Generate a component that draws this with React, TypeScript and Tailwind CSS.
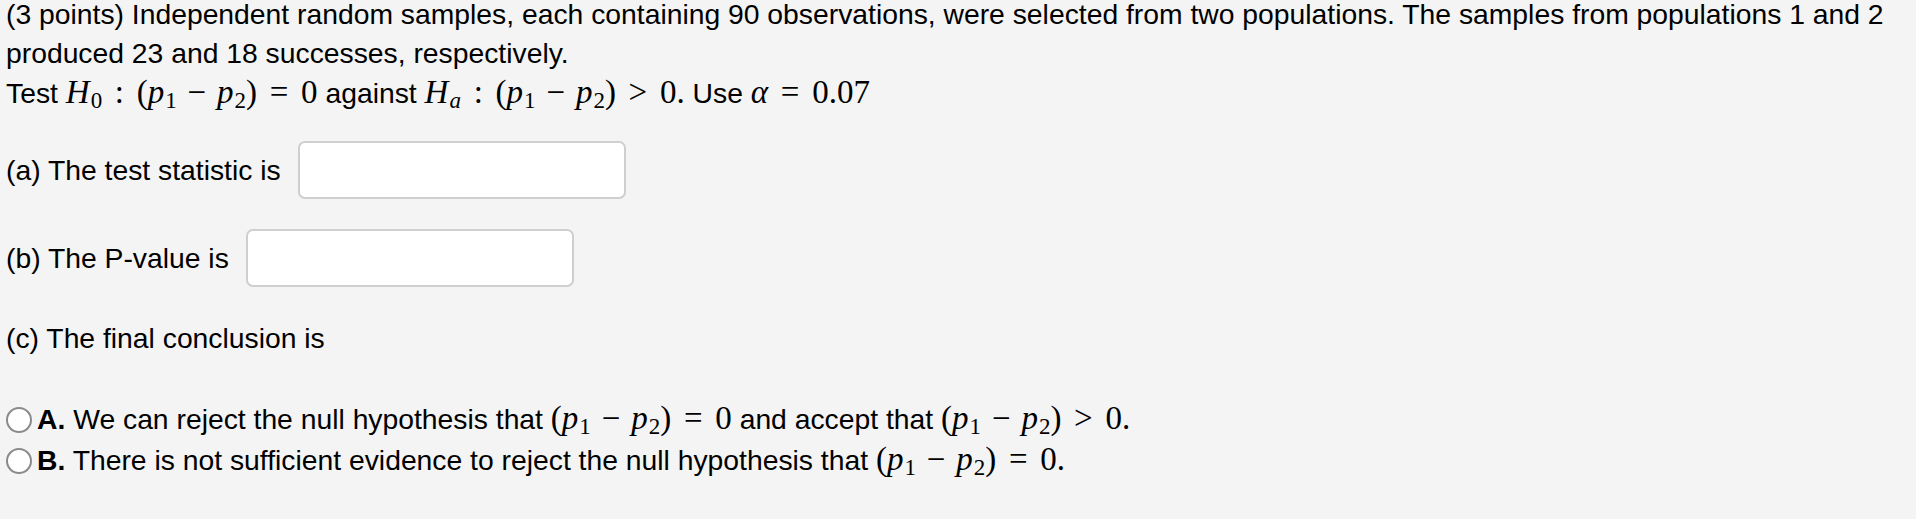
import React from "react";

const serif = "font-['Liberation_Serif','Times_New_Roman',serif]";

const V: React.FC<{ children: React.ReactNode }> = ({ children }) => (
  <span className="italic">{children}</span>
);

const Sub: React.FC<{ children: React.ReactNode }> = ({ children }) => (
  <span className="text-[23px] not-italic relative top-[5px] ml-[1px]">{children}</span>
);

// relation / binary operators padded out to MathJax widths
const Rel: React.FC<{ children: React.ReactNode }> = ({ children }) => (
  <span className="mx-[0.385em]">{children}</span>
);

const Bin: React.FC<{ children: React.ReactNode }> = ({ children }) => (
  <span className="mx-[0.33em]">{children}</span>
);

const Math: React.FC<{ children: React.ReactNode }> = ({ children }) => (
  <span className={`${serif} text-[33px] whitespace-nowrap`}>{children}</span>
);

const Diff = () => (
  <>
    (<V>p</V>
    <Sub>1</Sub>
    <Bin>−</Bin>
    <V>p</V>
    <Sub>2</Sub>)
  </>
);

const AnswerBox = () => (
  <input
    type="text"
    className="ml-[17px] w-[328px] h-[58px] bg-white border-2 border-[#cfcfcf] rounded-[7px] outline-none"
  />
);

const Radio: React.FC<{ letter: string; children: React.ReactNode }> = ({ letter, children }) => (
  <label className="flex items-center h-[41px] whitespace-nowrap">
    <span className="w-[26px] h-[26px] rounded-full border-2 border-[#8a8a8a] bg-white shrink-0" />
    <span className="ml-[5px]">
      <b>{letter}.</b> {children}
    </span>
  </label>
);

export default function App() {
  return (
    <div className="min-h-screen bg-[#f4f4f4] px-[6px] text-[28.3px] leading-[39px] text-black font-['Liberation_Sans',Arial,sans-serif]">
      <p className="-mt-[5px]">
        (3 points) Independent random samples, each containing 90 observations, were selected from two
        populations. The samples from populations 1 and 2
        <br />
        produced 23 and 18 successes, respectively.
        <br />
        Test{" "}
        <Math>
          <V>H</V>
          <Sub>0</Sub>
          <Rel>:</Rel>
          <Diff />
          <Rel>=</Rel>0
        </Math>{" "}
        against{" "}
        <Math>
          <V>H</V>
          <Sub>
            <V>a</V>
          </Sub>
          <Rel>:</Rel>
          <Diff />
          <Rel>&gt;</Rel>0.
        </Math>{" "}
        Use{" "}
        <Math>
          <V>α</V>
          <Rel>=</Rel>0.07
        </Math>
      </p>

      <div className="flex items-center mt-[26px]">
        <span>(a) The test statistic is</span>
        <AnswerBox />
      </div>

      <div className="flex items-center mt-[30px]">
        <span>(b) The P-value is</span>
        <AnswerBox />
      </div>

      <p className="mt-[32px]">(c) The final conclusion is</p>

      <div className="mt-[41px] flex flex-col">
        <Radio letter="A">
          We can reject the null hypothesis that{" "}
          <Math>
            <Diff />
            <Rel>=</Rel>0
          </Math>{" "}
          and accept that{" "}
          <Math>
            <Diff />
            <Rel>&gt;</Rel>0.
          </Math>
        </Radio>
        <Radio letter="B">
          There is not sufficient evidence to reject the null hypothesis that{" "}
          <Math>
            <Diff />
            <Rel>=</Rel>0.
          </Math>
        </Radio>
      </div>
    </div>
  );
}
